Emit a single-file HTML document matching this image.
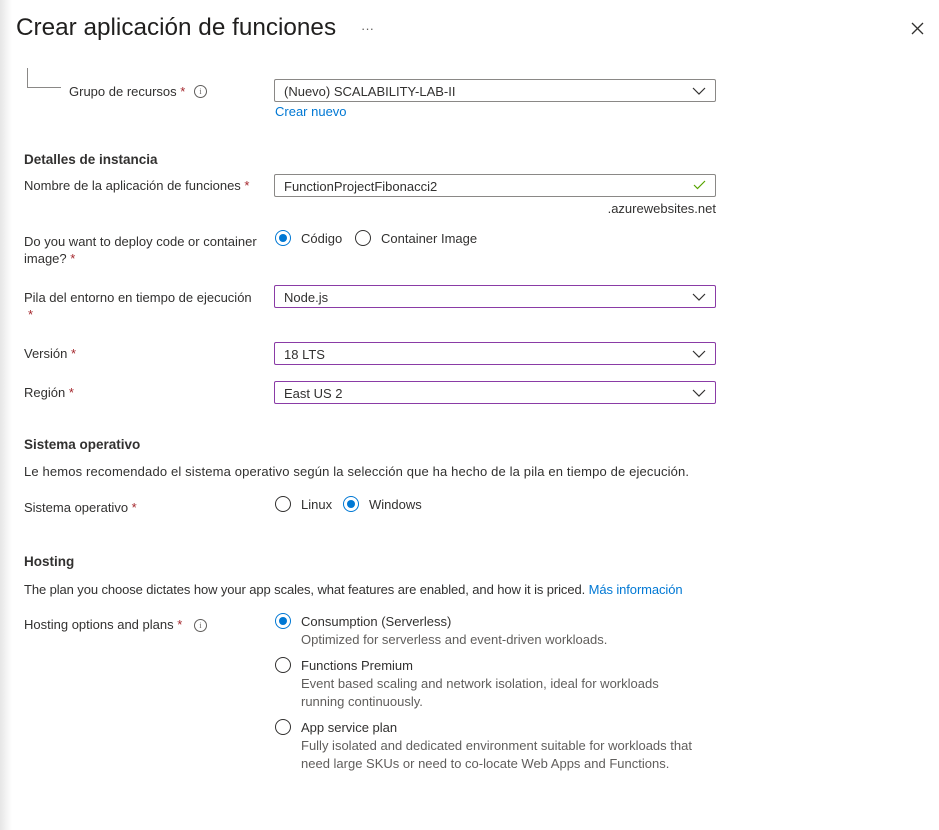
<!DOCTYPE html>
<html><head><meta charset="utf-8"><style>
html,body{margin:0;padding:0}
body{width:939px;height:830px;position:relative;overflow:hidden;background:#fff;font-family:"Segoe UI","Liberation Sans",sans-serif;color:#323130;font-size:13px}
.sh{position:absolute;left:0;top:0;width:12px;height:830px;background:linear-gradient(to right,#e6e6e6,#fff)}
.t{position:absolute;line-height:18px;white-space:nowrap}
.b{font-weight:bold;font-size:13.5px}
.r{color:#a4262c}
.box{position:absolute;left:274px;width:440px;height:21px;border:1px solid #8a8886;border-radius:2px}
.box.p{border-color:#8a3ba6}
.box span{position:absolute;left:9px;top:3px;line-height:17px}
.chev{position:absolute;right:9px;top:7px}
.rad{position:absolute;width:16px;height:16px;border:1px solid #323130;border-radius:50%;box-sizing:border-box}
.rad.on{border-color:#0078d4}
.rad.on::after{content:"";position:absolute;left:3px;top:3px;width:8px;height:8px;border-radius:50%;background:#0078d4}
.info{position:absolute;width:11px;height:11px;border:1px solid #605e5c;border-radius:50%;font-size:8px;line-height:11px;text-align:center;color:#605e5c;font-family:"Liberation Serif",serif}
.a{color:#0078d4}
.d{color:#605e5c}
</style></head><body>
<div class="sh"></div>
<div class="t" style="left:16px;top:12px;font-size:24.3px;line-height:32px;color:#201f1e">Crear aplicación de funciones</div>
<div class="t" style="left:361px;top:20px;font-size:13px;color:#605e5c">···</div>
<svg style="position:absolute;left:911px;top:22px" width="13" height="13"><path d="M1 1L12 12M12 1L1 12" stroke="#323130" stroke-width="1.3"/></svg>
<div style="position:absolute;left:27px;top:68px;width:33px;height:19px;border-left:1px solid #8a8886;border-bottom:1px solid #8a8886"></div>
<div class="t" style="left:69px;top:83px">Grupo de recursos <span class="r">*</span></div>
<div class="info" style="left:194px;top:85px">i</div>
<div class="box" style="top:79px"><span>(Nuevo) SCALABILITY-LAB-II</span><svg class="chev" width="14" height="8"><path d="M1 1L7 7L13 1" fill="none" stroke="#323130" stroke-width="1.2"/></svg></div>
<div class="t a" style="left:275px;top:103px">Crear nuevo</div>

<div class="t b" style="left:24px;top:151px">Detalles de instancia</div>
<div class="t" style="left:24px;top:177px">Nombre de la aplicación de funciones <span class="r">*</span></div>
<div class="box" style="top:174px"><span>FunctionProjectFibonacci2</span><svg class="chev" style="top:5px" width="13" height="10"><path d="M1 5L4.5 8.5L12 1" fill="none" stroke="#57a300" stroke-width="1.2"/></svg></div>
<div class="t" style="right:223px;top:200px">.azurewebsites.net</div>

<div class="t" style="left:24px;top:233px">Do you want to deploy code or container</div>
<div class="t" style="left:24px;top:250px">image? <span class="r">*</span></div>
<div class="rad on" style="left:275px;top:230px"></div>
<div class="t" style="left:301px;top:230px">Código</div>
<div class="rad" style="left:355px;top:230px"></div>
<div class="t" style="left:381px;top:230px">Container Image</div>

<div class="t" style="left:24px;top:289px">Pila del entorno en tiempo de ejecución</div>
<div class="t r" style="left:28px;top:306px">*</div>
<div class="box p" style="top:285px"><span>Node.js</span><svg class="chev" width="14" height="8"><path d="M1 1L7 7L13 1" fill="none" stroke="#323130" stroke-width="1.2"/></svg></div>
<div class="t" style="left:24px;top:345px">Versión <span class="r">*</span></div>
<div class="box p" style="top:342px"><span>18 LTS</span><svg class="chev" width="14" height="8"><path d="M1 1L7 7L13 1" fill="none" stroke="#323130" stroke-width="1.2"/></svg></div>
<div class="t" style="left:24px;top:384px">Región <span class="r">*</span></div>
<div class="box p" style="top:381px"><span>East US 2</span><svg class="chev" width="14" height="8"><path d="M1 1L7 7L13 1" fill="none" stroke="#323130" stroke-width="1.2"/></svg></div>

<div class="t b" style="left:24px;top:436px">Sistema operativo</div>
<div class="t" style="left:24px;top:463px;letter-spacing:0.15px">Le hemos recomendado el sistema operativo según la selección que ha hecho de la pila en tiempo de ejecución.</div>
<div class="t" style="left:24px;top:499px">Sistema operativo <span class="r">*</span></div>
<div class="rad" style="left:275px;top:496px"></div>
<div class="t" style="left:301px;top:496px">Linux</div>
<div class="rad on" style="left:343px;top:496px"></div>
<div class="t" style="left:369px;top:496px">Windows</div>

<div class="t b" style="left:24px;top:553px">Hosting</div>
<div class="t" style="left:24px;top:581px;letter-spacing:-0.1px">The plan you choose dictates how your app scales, what features are enabled, and how it is priced. <span class="a">Más información</span></div>
<div class="t" style="left:24px;top:616px">Hosting options and plans <span class="r">*</span></div>
<div class="info" style="left:194px;top:619px">i</div>
<div class="rad on" style="left:275px;top:613px"></div>
<div class="t" style="left:301px;top:613px">Consumption (Serverless)</div>
<div class="t d" style="left:301px;top:631px">Optimized for serverless and event-driven workloads.</div>
<div class="rad" style="left:275px;top:657px"></div>
<div class="t" style="left:301px;top:657px">Functions Premium</div>
<div class="t d" style="left:301px;top:675px">Event based scaling and network isolation, ideal for workloads</div>
<div class="t d" style="left:301px;top:693px">running continuously.</div>
<div class="rad" style="left:275px;top:719px"></div>
<div class="t" style="left:301px;top:719px">App service plan</div>
<div class="t d" style="left:301px;top:737px">Fully isolated and dedicated environment suitable for workloads that</div>
<div class="t d" style="left:301px;top:755px">need large SKUs or need to co-locate Web Apps and Functions.</div>
</body></html>
